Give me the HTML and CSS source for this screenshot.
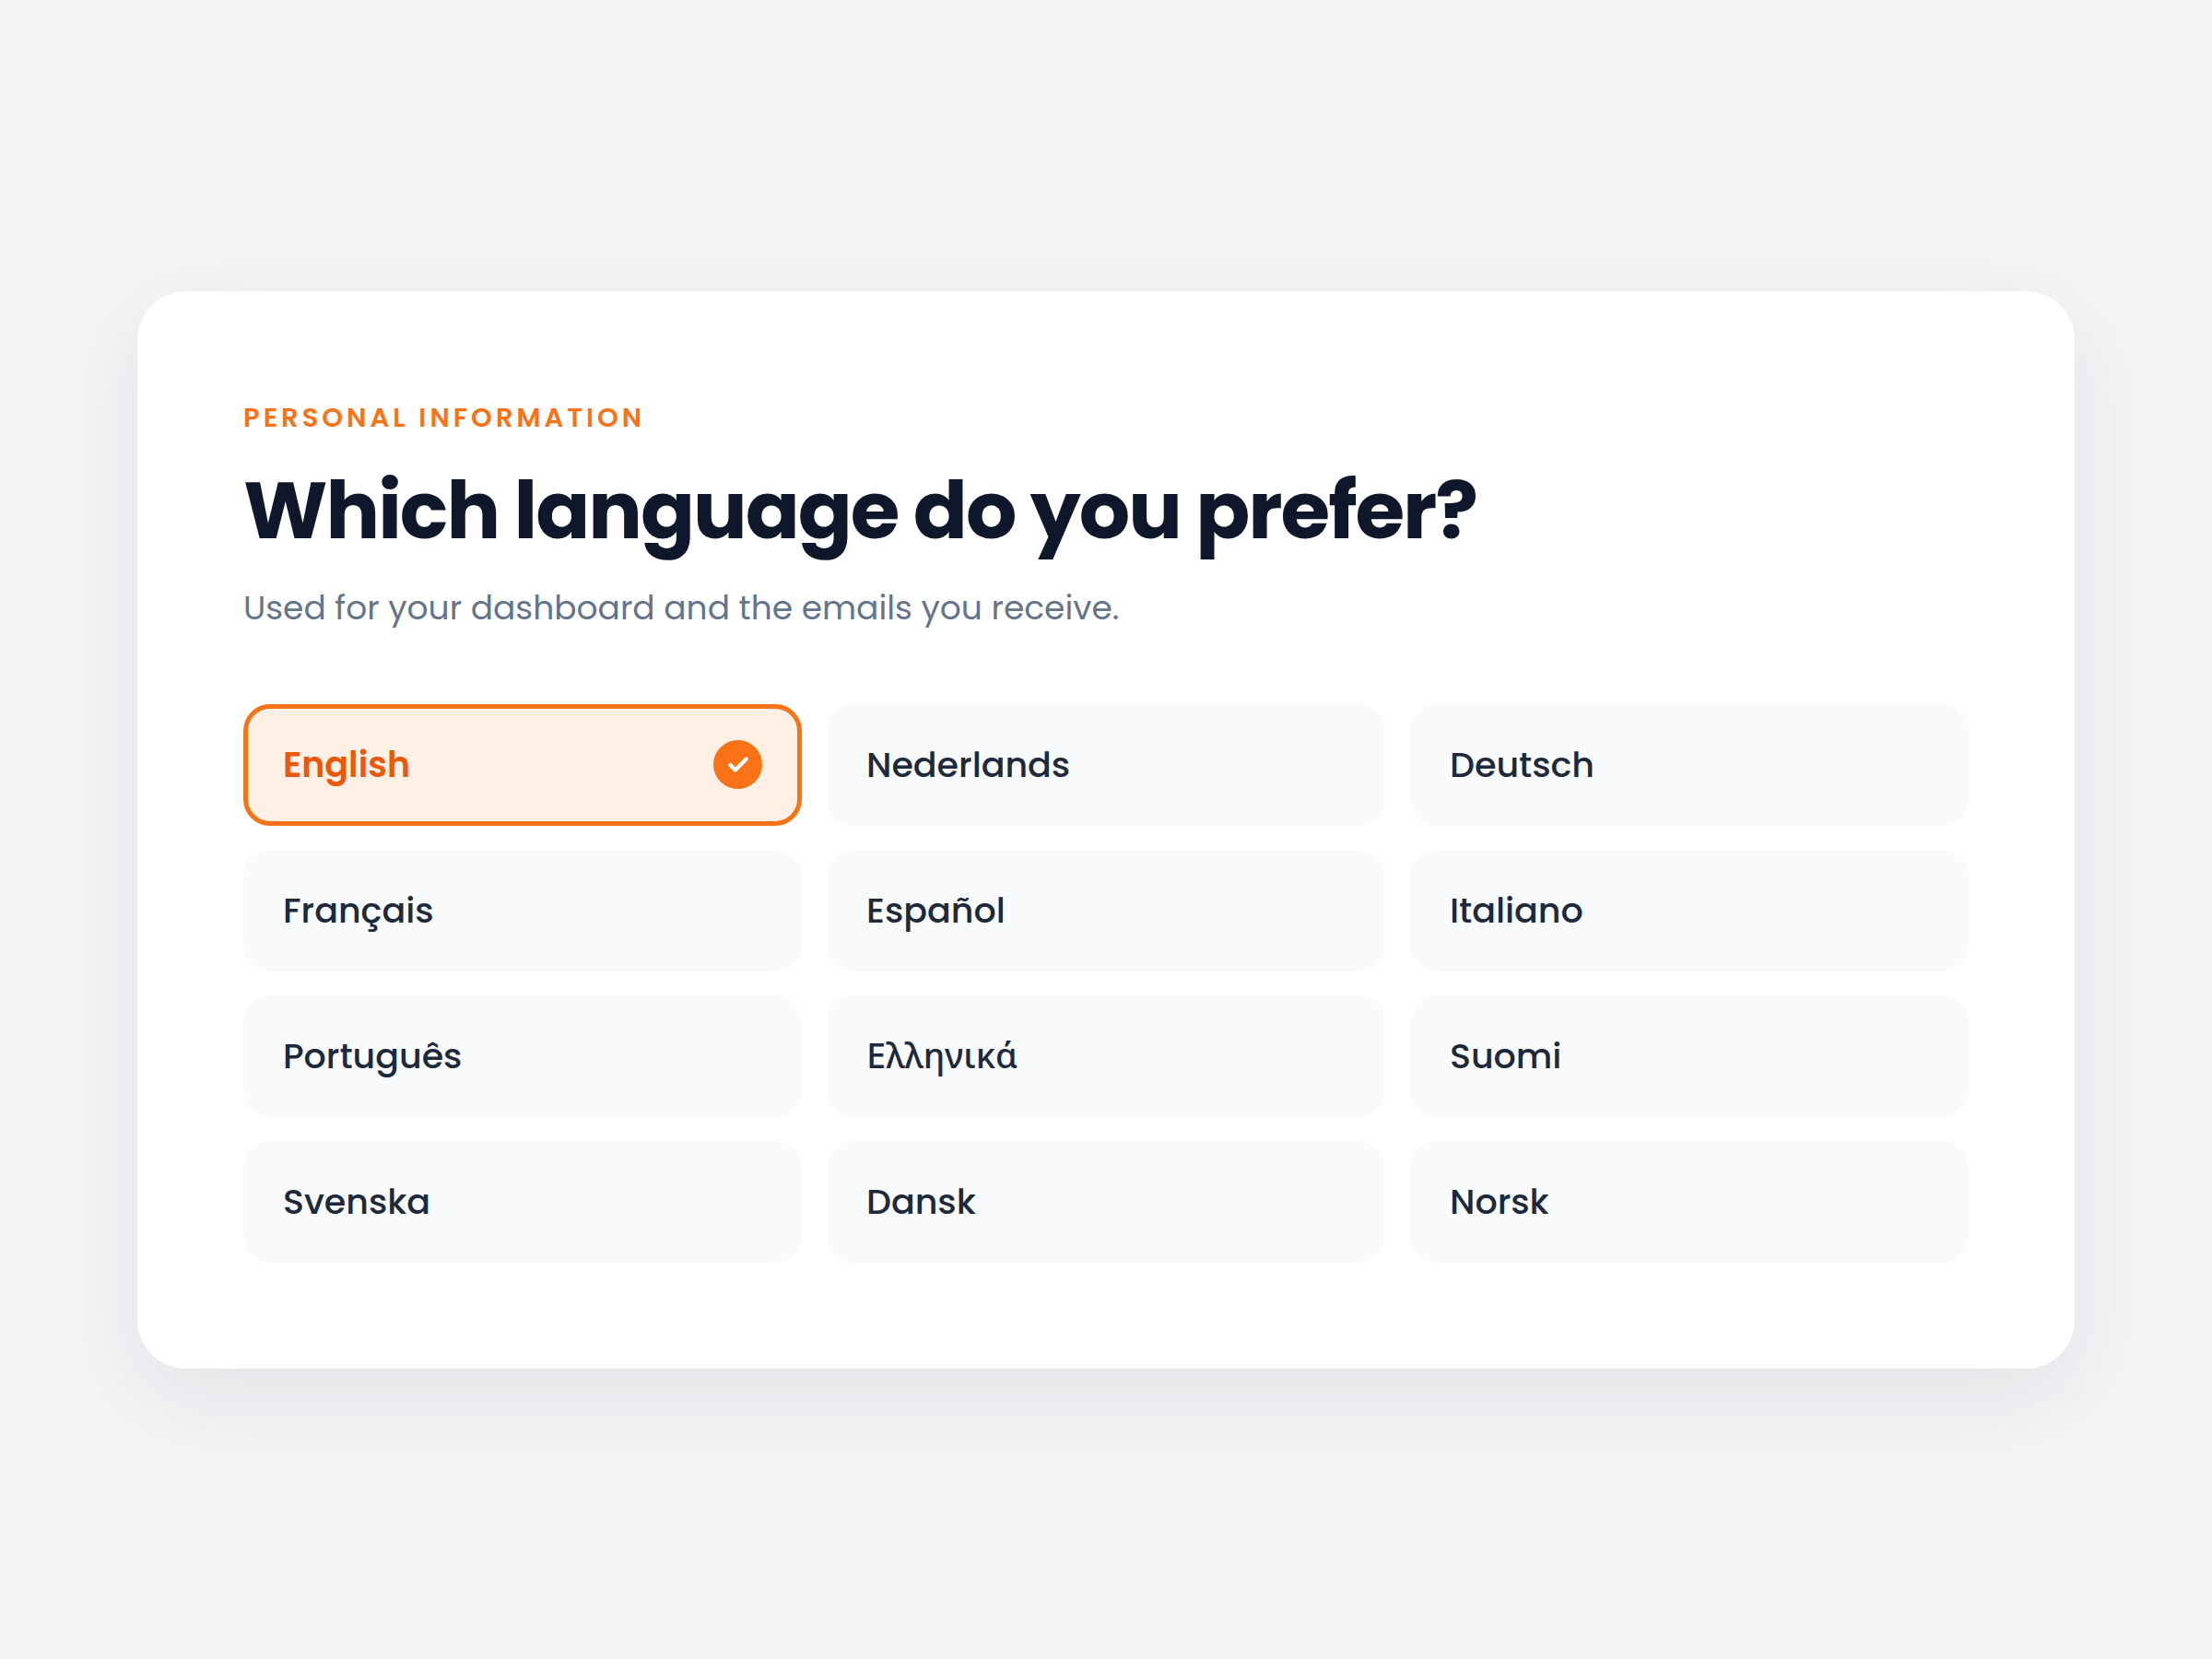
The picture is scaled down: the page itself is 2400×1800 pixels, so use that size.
FILE: index.html
```html
<!DOCTYPE html>
<html lang="en">
<head>
<meta charset="utf-8">
<meta name="viewport" content="width=device-width, initial-scale=1">
<title>Language preference</title>
<link rel="stylesheet" href="styles.css">
</head>
<body>
<svg class="sprite" aria-hidden="true">
  <symbol id="check" viewBox="0 0 24 24"><path d="M20 6 9 17l-5-5" fill="none" stroke="currentColor" stroke-width="4" stroke-linecap="round" stroke-linejoin="round"/></symbol>
</svg>
<main class="card">
  <header class="intro">
    <p class="eyebrow">PERSONAL INFORMATION</p>
    <h1 class="title" id="question">Which language do you prefer?</h1>
    <p class="hint" id="hint">Used for your dashboard and the emails you receive.</p>
  </header>
  <form class="options" role="radiogroup" aria-labelledby="question" aria-describedby="hint">
    <label class="option"><span lang="en">English</span><span class="mark"><input class="radio" type="radio" name="language" value="en" checked><svg class="tick" aria-hidden="true"><use href="#check"/></svg></span></label>
    <label class="option"><span lang="nl">Nederlands</span><span class="mark"><input class="radio" type="radio" name="language" value="nl"><svg class="tick" aria-hidden="true"><use href="#check"/></svg></span></label>
    <label class="option"><span lang="de">Deutsch</span><span class="mark"><input class="radio" type="radio" name="language" value="de"><svg class="tick" aria-hidden="true"><use href="#check"/></svg></span></label>
    <label class="option"><span lang="fr">Français</span><span class="mark"><input class="radio" type="radio" name="language" value="fr"><svg class="tick" aria-hidden="true"><use href="#check"/></svg></span></label>
    <label class="option"><span lang="es">Español</span><span class="mark"><input class="radio" type="radio" name="language" value="es"><svg class="tick" aria-hidden="true"><use href="#check"/></svg></span></label>
    <label class="option"><span lang="it">Italiano</span><span class="mark"><input class="radio" type="radio" name="language" value="it"><svg class="tick" aria-hidden="true"><use href="#check"/></svg></span></label>
    <label class="option"><span lang="pt">Português</span><span class="mark"><input class="radio" type="radio" name="language" value="pt"><svg class="tick" aria-hidden="true"><use href="#check"/></svg></span></label>
    <label class="option"><span lang="el">Ελληνικά</span><span class="mark"><input class="radio" type="radio" name="language" value="el"><svg class="tick" aria-hidden="true"><use href="#check"/></svg></span></label>
    <label class="option"><span lang="fi">Suomi</span><span class="mark"><input class="radio" type="radio" name="language" value="fi"><svg class="tick" aria-hidden="true"><use href="#check"/></svg></span></label>
    <label class="option"><span lang="sv">Svenska</span><span class="mark"><input class="radio" type="radio" name="language" value="sv"><svg class="tick" aria-hidden="true"><use href="#check"/></svg></span></label>
    <label class="option"><span lang="da">Dansk</span><span class="mark"><input class="radio" type="radio" name="language" value="da"><svg class="tick" aria-hidden="true"><use href="#check"/></svg></span></label>
    <label class="option"><span lang="no">Norsk</span><span class="mark"><input class="radio" type="radio" name="language" value="no"><svg class="tick" aria-hidden="true"><use href="#check"/></svg></span></label>
  </form>
</main>
</body>
</html>
```

FILE: styles.css
```css
* {
  box-sizing: border-box;
}

body {
  margin: 0;
  min-height: 100vh;
  padding: 48px;
  display: flex;
  align-items: center;
  justify-content: center;
  background: #f3f4f6;
  color: #1e293b;
  font-family: Poppins, "Noto Sans", sans-serif;
}

.sprite {
  display: none;
}

.card {
  width: 100%;
  max-width: 2102px;
  padding: 115px;
  border-radius: 53px;
  background: #fff;
  box-shadow: 0 29px 96px rgba(15, 23, 42, 0.08);
}

.intro {
  margin-bottom: 76px;
}

.eyebrow {
  margin: 0 0 22px;
  color: #f97316;
  font-size: 29px;
  font-weight: 600;
  line-height: 44px;
  letter-spacing: 4px;
}

.title {
  margin: 0 0 21px;
  color: #0f172a;
  font-size: 87px;
  font-weight: 700;
  line-height: 114px;
  letter-spacing: -2px;
}

.hint {
  margin: 0;
  color: #64748b;
  font-size: 36px;
  line-height: 56px;
}

.options {
  display: grid;
  grid-template-columns: repeat(3, 1fr);
  gap: 26px 27px;
}

.option {
  min-height: 132px;
  padding: 0 38px;
  display: flex;
  align-items: center;
  justify-content: space-between;
  border: 5px solid transparent;
  border-radius: 29px;
  background: #f8fafc;
  font-size: 38px;
  font-weight: 500;
  line-height: 60px;
  cursor: pointer;
}

.option:has(:checked) {
  border-color: #f97316;
  background: #fff0e5;
  color: #ea580c;
  font-weight: 600;
}

.mark {
  display: grid;
  place-items: center;
}

.radio,
.tick {
  grid-area: 1 / 1;
}

.radio {
  appearance: none;
  width: 53px;
  height: 53px;
  margin: 0;
  border-radius: 50%;
}

.radio:checked {
  background: #f97316;
}

.tick {
  display: none;
  width: 26px;
  height: 26px;
  color: #fff;
  pointer-events: none;
}

.radio:checked + .tick {
  display: block;
}
```
